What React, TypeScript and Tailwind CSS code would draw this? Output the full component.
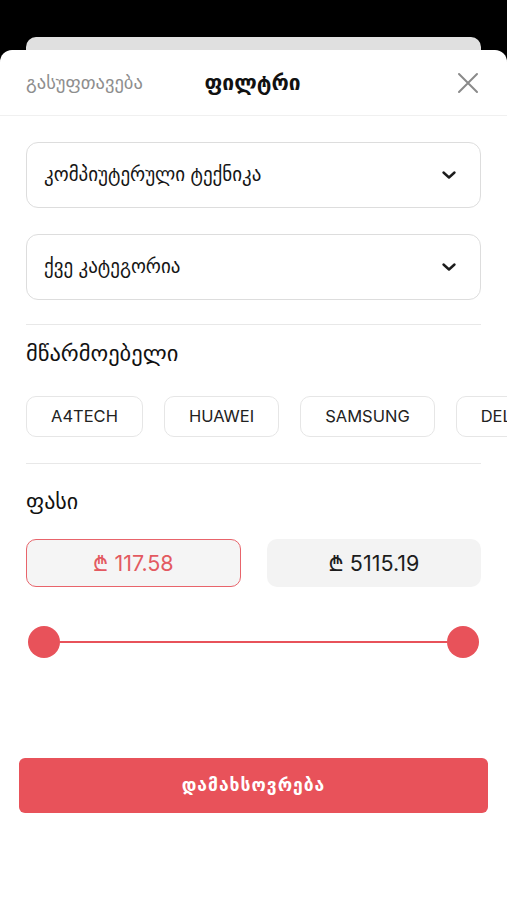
import React from 'react';

const brands = ['A4TECH', 'HUAWEI', 'SAMSUNG', 'DELL', 'LENOVO'];

function Chevron() {
  return (
    <svg width="16" height="10" viewBox="0 0 16 10" fill="none">
      <path d="M2.5 2.5l5.5 5 5.5-5" stroke="#1c1c1c" strokeWidth="2.4" strokeLinecap="round" strokeLinejoin="round" />
    </svg>
  );
}

function Select({ label }: { label: string }) {
  return (
    <div className="h-[66px] rounded-[12px] border border-[#dddddd] pl-[17px] pr-[23px] flex items-center justify-between">
      <span className="text-[19px] text-[#161616]">{label}</span>
      <Chevron />
    </div>
  );
}

function App() {
  return (
    <div className="min-h-screen bg-black flex flex-col font-[Inter,'DejaVu_Sans',sans-serif]">
      <div className="h-[50px] pt-[37px] px-[26px]">
        <div className="h-[13px] rounded-t-[10px] bg-[#e0e0e0]" />
      </div>

      <div className="flex-1 bg-white rounded-t-[12px]">
        <header className="h-[66px] grid grid-cols-[1fr_auto_1fr] items-center pl-[26px] pr-[28px] border-b border-[#f0f0f0]">
          <span className="text-[18.5px] text-[#8e8e8e]">გასუფთავება</span>
          <h1 className="text-[21px] font-bold text-[#111]">ფილტრი</h1>
          <div className="flex justify-end">
            <svg width="22" height="22" viewBox="0 0 22 22" fill="none">
              <path d="M2 2l18 18M20 2L2 20" stroke="#8a8a8a" strokeWidth="2" strokeLinecap="round" />
            </svg>
          </div>
        </header>

        <section className="px-[26px] pt-[26px] flex flex-col gap-[26px]">
          <Select label="კომპიუტერული ტექნიკა" />
          <Select label="ქვე კატეგორია" />
        </section>

        <div className="mx-[26px] mt-[24px] border-t border-[#e8e8e8]" />

        <h2 className="px-[26px] mt-[14px] text-[22.5px] text-[#111] leading-[28px]">მწარმოებელი</h2>

        <div className="mt-[29px] pl-[26px] flex gap-[21px] overflow-hidden whitespace-nowrap">
          {brands.map((b) => (
            <div
              key={b}
              className="shrink-0 h-[41px] px-[24px] rounded-[10px] border border-[#e6e6e6] flex items-center text-[16.5px] text-[#222]"
            >
              {b}
            </div>
          ))}
        </div>

        <div className="mx-[26px] mt-[26px] border-t border-[#e8e8e8]" />

        <h2 className="px-[26px] mt-[23px] text-[22px] text-[#111] leading-[28px]">ფასი</h2>

        <div className="mt-[24px] px-[26px] grid grid-cols-2 gap-[26px]">
          <div className="h-[48px] rounded-[10px] border-[1.5px] border-[#e8646b] bg-[#f5f5f5] flex items-center justify-center text-[21.5px] text-[#e35a61]">
            ₾ 117.58
          </div>
          <div className="h-[48px] rounded-[10px] bg-[#f3f3f3] flex items-center justify-center text-[21.5px] text-[#1c1c1c]">
            ₾ 5115.19
          </div>
        </div>

        <div className="mt-[39px] px-[28px] flex items-center">
          <div className="w-[32px] h-[32px] rounded-full bg-[#e8525a] shrink-0" />
          <div className="flex-1 h-[2px] bg-[#e8525a]" />
          <div className="w-[32px] h-[32px] rounded-full bg-[#e8525a] shrink-0" />
        </div>

        <div className="mt-[100px] px-[19px]">
          <button className="w-full h-[55px] rounded-[6px] bg-[#e8525a] text-white text-[17.5px] font-bold tracking-[1px]">
            დამახსოვრება
          </button>
        </div>
      </div>
    </div>
  );
}

export default App;
